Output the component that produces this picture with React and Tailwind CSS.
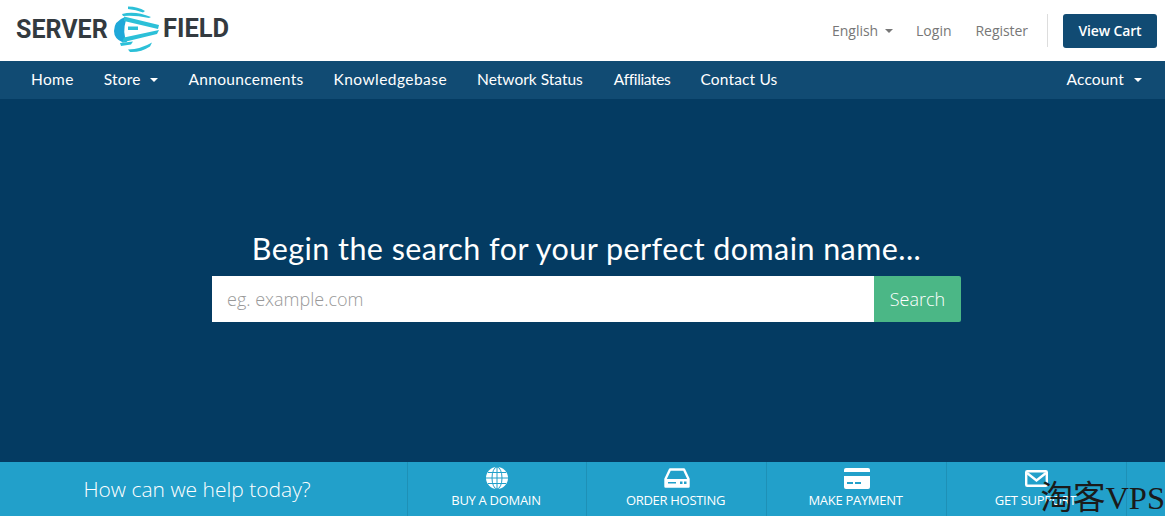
import React from "react";

const Caret = ({ className = "" }) => (
  <span className={"inline-block w-0 h-0 border-x-[4px] border-x-transparent border-t-[4px] " + className} />
);

const Logo = () => (
  <div className="flex items-center h-[61px] mt-[-3px]">
    <span className="font-['Roboto',sans-serif] font-bold text-[25px] leading-none text-[#333a3f] w-[97px]">SERVER</span>
    <svg width="46" height="48" viewBox="0 0 46 48" className="mt-[-1px] shrink-0">
      <path d="M15 1.5 Q25 1.5 32 6 L30 7.5 Q23 4.5 15 4Z" fill="#2cc0d8" />
      <path d="M9 9 Q22 5.5 38 12 L36 13 Q22 10 10 11Z" fill="#2cc0d8" />
      <path d="M12 12 Q1 16 1 26 Q1 34 10 37.5 L14 37 Q9 28 13 15 Z" fill="#1fa8d9" />
      <path d="M11 11.5 L46 20 L45 24 L11 16 Z" fill="#2cc0d8" />
      <path d="M9 37.5 L44 29 L46 25 L11 32.5 Z" fill="#2cc0d8" />
      <path d="M15 21.5H25V25H15Z" fill="#2cc0d8" />
      <path d="M7 38 L20 36.5 L18 39.5 L8 41Z" fill="#2cc0d8" />
      <path d="M15 44.5 Q28 44 39 37.5 L37 41.5 Q28 47.5 17 47Z" fill="#2cc0d8" />
    </svg>
    <span className="ml-[4px] font-['Roboto',sans-serif] font-bold text-[25.5px] leading-none text-[#333a3f]">FIELD</span>
  </div>
);

const navItems = [
  ["Home", false, "tracking-[0.35px]"],
  ["Store", true, "tracking-[0.2px]"],
  ["Announcements", false, "tracking-[0.3px] ml-px"],
  ["Knowledgebase", false, "tracking-[0.45px]"],
  ["Network Status", false, "tracking-[0px]"],
  ["Affiliates", false, "tracking-[-0.35px] ml-px"],
  ["Contact Us", false, "tracking-[0.15px]"],
];

const Globe = () => (
  <svg width="22" height="22" viewBox="0 0 22 22">
    <circle cx="11" cy="11" r="11" fill="#fff" />
    <g fill="none" stroke="#22a0ca" strokeWidth="1">
      <ellipse cx="11" cy="11" rx="5" ry="11" />
      <path d="M11 0V22M0 11H22M2 5.5H20M2 16.5H20" />
    </g>
  </svg>
);
const Drive = () => (
  <svg width="26" height="20" viewBox="0 0 26 20">
    <path d="M6 1.5H20L24.5 11V18.5H1.5V11Z" fill="none" stroke="#fff" strokeWidth="2.4" strokeLinejoin="round" />
    <path d="M1.5 11H24.5V18.5H1.5Z" fill="#fff" />
    <rect x="16" y="13.5" width="2.5" height="2.5" fill="#22a0ca" />
    <rect x="20" y="13.5" width="2.5" height="2.5" fill="#22a0ca" />
    <rect x="4" y="14" width="8" height="1.5" fill="#22a0ca" />
  </svg>
);
const Card = () => (
  <svg width="26" height="21" viewBox="0 0 26 21">
    <path d="M2 0H24Q26 0 26 2V4H0V2Q0 0 2 0Z" fill="#fff" />
    <path d="M0 8H26V19Q26 21 24 21H2Q0 21 0 19Z" fill="#fff" />
    <rect x="3" y="14" width="6" height="2" fill="#22a0ca" />
    <rect x="11" y="14" width="6" height="2" fill="#22a0ca" />
  </svg>
);
const Mail = () => (
  <svg width="23" height="17" viewBox="0 0 23 17">
    <rect x="1.2" y="1.2" width="20.6" height="14.6" rx="1" fill="none" stroke="#fff" strokeWidth="2.4" />
    <path d="M2 3L11.5 10.5L21 3" fill="none" stroke="#fff" strokeWidth="2.4" />
  </svg>
);

const actions = [
  ["BUY A DOMAIN", <Globe />],
  ["ORDER HOSTING", <Drive />],
  ["MAKE PAYMENT", <Card />],
  ["GET SUPPORT", <Mail />],
];

export default function App() {
  return (
    <div className="relative w-[1165px] h-[516px] overflow-hidden flex flex-col bg-[#043b62]">
      <header className="h-[61px] bg-white flex items-center justify-between pl-[16px] pr-[8px] shrink-0">
        <Logo />
        <div className="flex items-center font-['Open_Sans',sans-serif] text-[14px] text-[#777]">
          <span className="flex items-center gap-[7px] tracking-[-0.05px]">English <Caret className="border-t-[#777]" /></span>
          <span className="ml-[23px]">Login</span>
          <span className="ml-[24px] tracking-[-0.05px]">Register</span>
          <span className="ml-[19px] w-px h-[33px] bg-[#ddd]" />
          <span className="ml-[15px] w-[94px] h-[34px] rounded-[3px] bg-[#114b73] text-white font-semibold tracking-[-0.15px] flex items-center justify-center">View Cart</span>
        </div>
      </header>

      <nav className="h-[38px] bg-[#114b73] flex items-center justify-between pl-[31px] pr-[23px] shrink-0 font-['Lato',sans-serif] text-[15.5px] text-white">
        <div className="flex items-center gap-[30px]">
          {navItems.map(([label, caret, track]) => (
            <span key={label} className={"flex items-center gap-[9px] " + track}>
              {label}
              {caret && <Caret className="border-t-white" />}
            </span>
          ))}
        </div>
        <span className="flex items-center gap-[10px] tracking-[0.15px]">Account <Caret className="border-t-white" /></span>
      </nav>

      <main className="flex-1 flex flex-col items-center pt-[127px] pl-[8px]">
        <h1 className="font-['Lato',sans-serif] font-normal text-[30.5px] leading-[44px] text-white tracking-[0.44px]">
          Begin the search for your perfect domain name...
        </h1>
        <div className="mt-[6px] flex w-[749px] h-[46px]">
          <div className="flex-1 bg-white flex items-center pl-[15px] font-['Open_Sans',sans-serif] font-light text-[18px] text-[#999]">
            eg. example.com
          </div>
          <button className="w-[87px] bg-[#4bb786] rounded-r-[2px] text-white font-['Open_Sans',sans-serif] font-light text-[18px]">
            Search
          </button>
        </div>
      </main>

      <section className="h-[54px] bg-[#22a0ca] flex shrink-0 text-white">
        <div className="w-[407px] flex items-center justify-center pr-[13px] pt-[2px] font-['Open_Sans',sans-serif] font-light text-[21px]">
          How can we help today?
        </div>
        <div className="flex border-l border-[#1e90b6]">
          {actions.map(([label, icon]) => (
            <div key={label} className="w-[180px] first:w-[179px] border-r border-[#1e90b6] flex flex-col items-center pt-[5px]">
              <div className="h-[22px] flex items-center justify-center">{icon}</div>
              <span className="mt-[1px] pr-[2px] font-['Open_Sans',sans-serif] text-[13px] leading-[20px] tracking-[-0.3px]">{label}</span>
            </div>
          ))}
        </div>
      </section>

      <div className="absolute right-0 bottom-0 font-['Liberation_Serif','Noto_Sans_CJK_SC',serif] text-[32.5px] leading-[36px] text-[#1a1a1a]">
        淘客VPS
      </div>
    </div>
  );
}
